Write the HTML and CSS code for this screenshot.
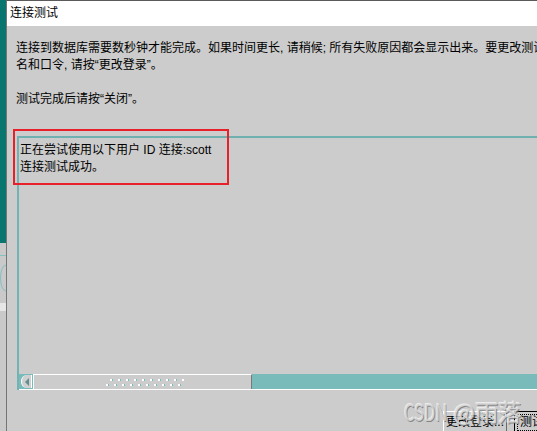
FILE: index.html
```html
<!DOCTYPE html>
<html lang="zh-CN">
<head>
<meta charset="utf-8">
<title>连接测试</title>
<link rel="stylesheet" href="styles.css">
</head>
<body>
<div class="screen">
  <div class="behind">
    <div class="behind-teal"></div>
    <svg class="behind-art" width="6" height="188" viewBox="0 0 6 188">
      <rect x="0" y="0" width="6" height="188" fill="#c9c9c9"/>
      <line x1="0" y1="12.5" x2="6" y2="12.5" stroke="#86c0c0" stroke-width="1"/>
      <path d="M6 22 A 5.5 13 0 0 0 6 48" stroke="#86c0c0" stroke-width="1" fill="none"/>
      <rect x="0" y="60" width="6" height="8" fill="#e6e6e6"/>
    </svg>
  </div>
  <div class="dialog">
    <div class="titlebar">连接测试</div>
    <div class="content">
      <p class="intro">连接到数据库需要数秒钟才能完成。如果时间更长, 请稍候; 所有失败原因都会显示出来。要更改测试用户<br>名和口令, 请按“更改登录”。<br><br>测试完成后请按“关闭”。</p>
      <div class="log">
        <div class="log-text">正在尝试使用以下用户 ID 连接:scott<br>连接测试成功。</div>
        <div class="hscroll">
          <div class="arrow-btn"><div class="arrow-cap"><span class="arrow-tri"></span></div></div>
          <div class="thumb"><div class="grip"></div></div>
          <div class="track"></div>
        </div>
      </div>
      <div class="buttons">
        <div class="btn">更改登录...</div>
        <div class="btn btn-default"><span class="focus">测试...</span></div>
      </div>
    </div>
  </div>
  <div class="highlight"></div>
  <div class="watermark"><span class="wm-latin">CSDN</span> @雨落</div>
</div>
</body>
</html>
```

FILE: styles.css
```css
html, body {
  margin: 0;
  padding: 0;
}
body {
  width: 537px;
  height: 431px;
  overflow: hidden;
  font-family: "Liberation Sans", "Noto Sans CJK SC", sans-serif;
  font-size: 12px;
  color: #000;
  background: #cccccc;
}
.screen {
  position: relative;
  display: flex;
  height: 431px;
  background: #cccccc;
}
.behind {
  width: 6px;
  flex: none;
  display: flex;
  flex-direction: column;
  background: #c9c9c9;
}
.behind-teal {
  height: 243px;
  background: #08766e;
}
.behind-art {
  display: block;
}
.dialog {
  flex: 1;
  min-width: 0;
  display: flex;
  flex-direction: column;
  border-left: 1px solid #767676;
  border-top: 1px solid #5a5a5a;
  background: #cccccc;
}
.titlebar {
  height: 25px;
  line-height: 25px;
  background: #ffffff;
  padding-left: 3px;
  white-space: nowrap;
}
.content {
  flex: 1;
  min-height: 0;
  padding: 14px 0 0 9px;
  display: flex;
  flex-direction: column;
  overflow: hidden;
}
.intro {
  margin: 0;
  line-height: 17px;
  white-space: nowrap;
}
.log {
  margin-top: 28px;
  margin-left: 1px;
  height: 254px;
  flex: none;
  box-sizing: border-box;
  border-top: 2px solid #6fb0b0;
  border-left: 2px solid #74b3b3;
  display: flex;
  flex-direction: column;
}
.log-text {
  flex: 1;
  padding: 4px 0 0 1px;
  line-height: 17px;
  white-space: nowrap;
}
.hscroll {
  height: 15px;
  flex: none;
  display: flex;
  border-bottom: 1px solid #ffffff;
}
.arrow-btn {
  width: 14px;
  flex: none;
  background: #79baba;
  display: flex;
  align-items: center;
}
.arrow-cap {
  width: 11px;
  height: 13px;
  margin-left: 2px;
  box-sizing: border-box;
  background: #cfcfcf;
  border-left: 1px solid #ffffff;
  border-radius: 6px 0 0 6px;
  border-right: 1px solid #ffffff;
  display: flex;
  align-items: center;
  justify-content: center;
}
.arrow-tri {
  width: 0;
  height: 0;
  border-top: 4px solid transparent;
  border-bottom: 4px solid transparent;
  border-right: 4px solid #5e8f8f;
}
.thumb {
  width: 219px;
  flex: none;
  box-sizing: border-box;
  background: #cccccc;
  border-top: 1px solid #ffffff;
  border-left: 1px solid #ffffff;
  border-right: 1px solid #7a7a7a;
  display: flex;
  align-items: center;
  padding-left: 72px;
}
.grip {
  width: 78px;
  height: 7px;
  background-image:
    linear-gradient(90deg, #ffffff 2px, #79baba 2px, #79baba 3px, transparent 3px),
    linear-gradient(90deg, #ffffff 2px, #79baba 2px, #79baba 3px, transparent 3px);
  background-size: 8px 2px, 8px 2px;
  background-position: 4px 0, 0 5px;
  background-repeat: repeat-x;
}
.track {
  flex: 1;
  background: #79baba;
}
.buttons {
  display: flex;
  gap: 7px;
  margin-top: 21px;
  padding-left: 427px;
  white-space: nowrap;
}
.btn {
  flex: none;
  height: 22px;
  box-sizing: border-box;
  padding: 2px 0 0 2px;
  line-height: 16px;
  background: #cccccc;
  border-top: 1px solid #ffffff;
  border-left: 1px solid #ffffff;
  border-right: 1px solid #6a6a6a;
  border-bottom: 1px solid #6a6a6a;
  width: 64px;
}
.btn-default {
  width: 60px;
  border: 1px solid #000000;
  padding: 2px;
}
.focus {
  display: block;
  border: 1px dotted #000000;
  padding-left: 2px;
  line-height: 15px;
}
.highlight {
  position: absolute;
  left: 13px;
  top: 129px;
  width: 216px;
  height: 56px;
  box-sizing: border-box;
  border: 2px solid #e8202a;
}
.watermark {
  position: absolute;
  left: 404px;
  top: 397px;
  font-family: "Noto Sans CJK SC", sans-serif;
  font-size: 23px;
  line-height: 28px;
  white-space: nowrap;
  color: rgba(215, 215, 215, 0.9);
  text-shadow: 1px 1px 0 rgba(110, 110, 110, 0.75), -1px -1px 0 rgba(250, 250, 250, 0.7);
}
.wm-latin {
  display: inline-block;
  transform: scaleX(0.72);
  transform-origin: left center;
  margin-right: -16px;
}
```
